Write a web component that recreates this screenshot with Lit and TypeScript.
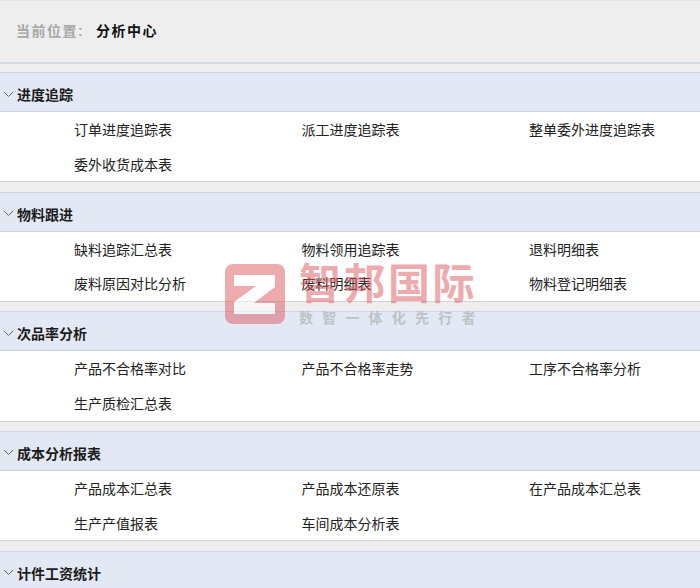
import { LitElement, html, css } from "lit";
import { customElement } from "lit/decorators.js";

const SECTIONS: { title: string; items: string[] }[] = [
  { title: "进度追踪", items: ["订单进度追踪表", "派工进度追踪表", "整单委外进度追踪表", "委外收货成本表"] },
  { title: "物料跟进", items: ["缺料追踪汇总表", "物料领用追踪表", "退料明细表", "废料原因对比分析", "废料明细表", "物料登记明细表"] },
  { title: "次品率分析", items: ["产品不合格率对比", "产品不合格率走势", "工序不合格率分析", "生产质检汇总表"] },
  { title: "成本分析报表", items: ["产品成本汇总表", "产品成本还原表", "在产品成本汇总表", "生产产值报表", "车间成本分析表"] },
  { title: "计件工资统计", items: [] },
];

@customElement("app-root")
export class AppRoot extends LitElement {
  static styles = css`
    :host {
      display: block;
      position: relative;
      width: 700px;
      height: 588px;
      overflow: hidden;
      background: #eeeeee;
      font-family: "Liberation Sans", "Noto Sans CJK SC", sans-serif;
      color: #222;
    }
    .crumb {
      height: 64px;
      box-sizing: border-box;
      border-top: 1px solid #e4e4e4;
      border-bottom: 2px solid #d5d9e4;
      display: flex;
      align-items: center;
      padding-left: 16px;
      padding-bottom: 3px;
      font-size: 14px;
      font-weight: 700;
      letter-spacing: 1.5px;
    }
    .crumb .label { color: #a8a8a8; width: 80px; }
    .crumb .value { color: #111; }
    .sections {
      padding-top: 8px;
      display: flex;
      flex-direction: column;
      gap: 10px;
    }
    .section {
      height: 109.67px;
      box-sizing: border-box;
      display: flex;
      flex-direction: column;
    }
    .head {
      height: 40px;
      flex: none;
      box-sizing: border-box;
      background: #e3e9f4;
      border-top: 1px solid #ced4e2;
      border-bottom: 1px solid #c9cfdd;
      display: flex;
      align-items: center;
      gap: 3px;
      padding-left: 3px;
      padding-top: 4px;
      font-size: 14px;
      font-weight: 700;
      color: #1b1b1b;
    }
    .head svg { width: 11px; height: 7px; flex: none; }
    .body {
      flex: 1;
      background: #fff;
      border-bottom: 1px solid #d4d4d4;
      display: grid;
      grid-template-columns: 227.5px 227.5px 1fr;
      grid-auto-rows: 34.7px;
      padding-left: 74px;
      font-size: 14px;
      color: #222;
    }
    .cell { display: flex; align-items: center; white-space: nowrap; padding-bottom: 1px; box-sizing: border-box; }
    .mark {
      position: absolute;
      left: 225px;
      top: 264px;
      display: flex;
      gap: 14px;
      pointer-events: none;
      opacity: 0.5;
    }
    .logo { width: 60px; height: 60px; display: block; }
    .brand { display: flex; flex-direction: column; }
    .brand .big {
      font-size: 42px;
      line-height: 42px;
      font-weight: 700;
      color: #dc5a60;
      letter-spacing: 2.5px;
      white-space: nowrap;
    }
    .brand .small {
      font-size: 14px;
      line-height: 18px;
      color: #9a9a9a;
      font-weight: 700;
      letter-spacing: 9.2px;
      white-space: nowrap;
      margin-top: 3px;
    }
  `;

  render() {
    return html`
      <div class="crumb"><span class="label">当前位置:</span><span class="value">分析中心</span></div>
      <div class="sections">
        ${SECTIONS.map(
          (s) => html`
            <div class="section">
              <div class="head">
                <svg viewBox="0 0 11 7"><path d="M1 1l4.5 4.5L10 1" fill="none" stroke="#666" stroke-width="1"/></svg>
                <span>${s.title}</span>
              </div>
              ${s.items.length
                ? html`<div class="body">${s.items.map((i) => html`<div class="cell">${i}</div>`)}</div>`
                : ""}
            </div>
          `
        )}
      </div>
      <div class="mark">
        <svg class="logo" viewBox="0 0 60 60">
          <rect width="60" height="60" rx="8" fill="#dc5a60"/>
          <path d="M9 11H50V23L29 39H50V50H9V38L31 22H9Z" fill="#fff"/>
        </svg>
        <div class="brand">
          <div class="big">智邦国际</div>
          <div class="small">数智一体化先行者</div>
        </div>
      </div>
    `;
  }
}
